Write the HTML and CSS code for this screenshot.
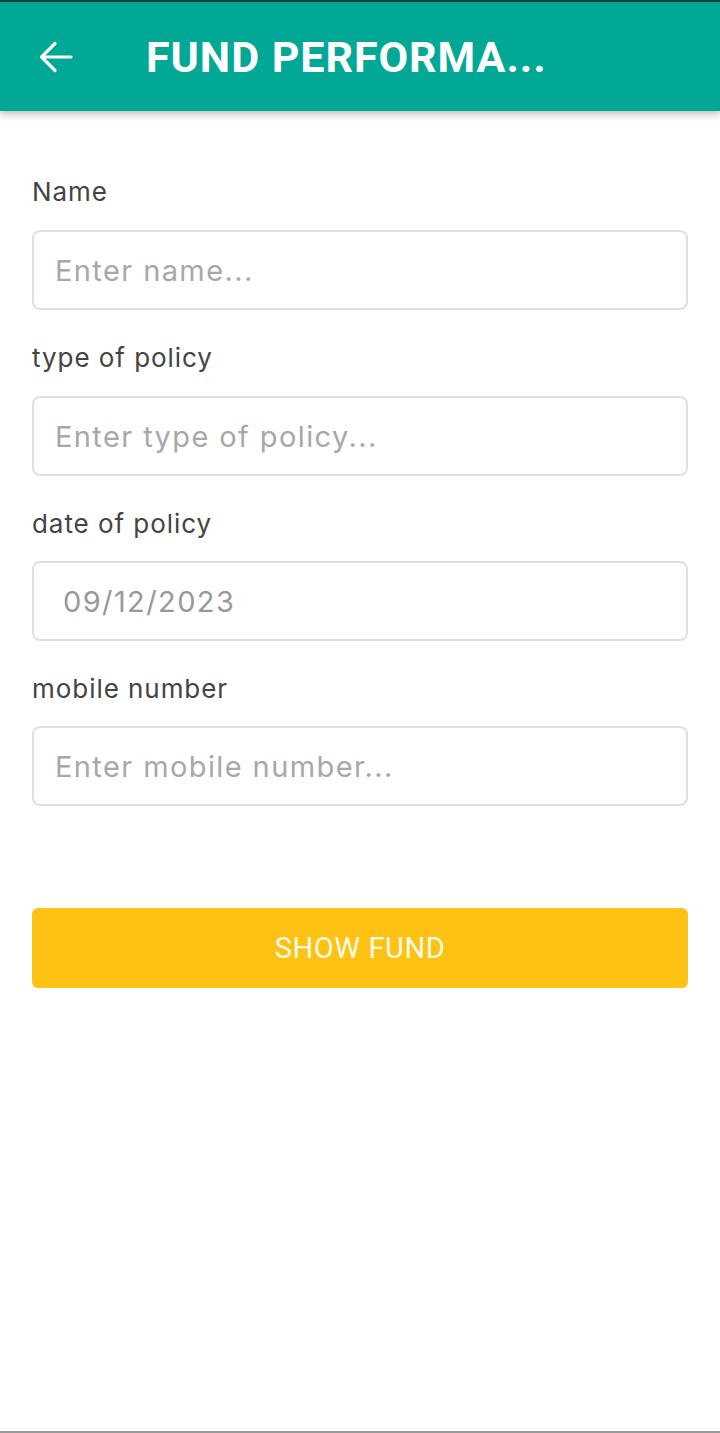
FILE: index.html
```html
<!DOCTYPE html>
<html>
<head>
<meta charset="utf-8">
<link rel="stylesheet" href="styles.css">
</head>
<body>
<div class="screen">
  <header class="appbar">
    <button class="back" aria-label="Back">
      <svg width="48" height="48" viewBox="0 0 48 48">
        <path d="M39 24H10.5M23 10.5L9.5 24L23 37.5" fill="none" stroke="#fff" stroke-width="3.2" stroke-linecap="round" stroke-linejoin="round"/>
      </svg>
    </button>
    <h1 class="title">FUND PERFORMA...</h1>
  </header>
  <main class="form">
    <div class="field">
      <label class="label">Name</label>
      <div class="input placeholder">Enter name...</div>
    </div>
    <div class="field">
      <label class="label">type of policy</label>
      <div class="input placeholder">Enter type of policy...</div>
    </div>
    <div class="field">
      <label class="label">date of policy</label>
      <div class="input date">09/12/2023</div>
    </div>
    <div class="field">
      <label class="label">mobile number</label>
      <div class="input placeholder">Enter mobile number...</div>
    </div>
    <button class="submit">SHOW FUND</button>
  </main>
  <div class="spacer"></div>
  <div class="bottomline"></div>
</div>
</body>
</html>
```

FILE: styles.css
```css
* { box-sizing: border-box; }
html, body { margin: 0; padding: 0; }
body {
  background: #ffffff;
  font-family: Inter, Roboto, "Noto Sans", sans-serif;
}
.screen {
  width: 720px;
  height: 1433px;
  display: flex;
  flex-direction: column;
  overflow: hidden;
}
.appbar {
  height: 111px;
  flex: none;
  background: #02a896;
  border-top: 2px solid #1d3d39;
  display: flex;
  align-items: center;
  box-shadow: 0 3px 8px rgba(0,0,0,0.28);
  position: relative;
  z-index: 1;
}
.back {
  width: 48px;
  height: 48px;
  margin-left: 32px;
  padding: 0;
  border: 0;
  background: none;
  display: flex;
}
.title {
  margin: 0 0 0 66px;
  color: #ffffff;
  font-family: Roboto, sans-serif;
  font-weight: 700;
  font-size: 43px;
  letter-spacing: 0.95px;
}
.form {
  padding: 63px 32px 0 32px;
  display: flex;
  flex-direction: column;
}
.field {
  display: flex;
  flex-direction: column;
  margin-bottom: 30px;
}
.label {
  font-size: 26px;
  line-height: 36px;
  letter-spacing: 0.95px;
  color: #444444;
  margin-bottom: 20px;
}
.field:nth-child(n+3) .label { margin-bottom: 19px; }
.input {
  height: 80px;
  border: 2px solid #e0e0e0;
  border-radius: 8px;
  display: flex;
  align-items: center;
  padding-left: 21px;
  font-size: 29px;
  letter-spacing: 1.4px;
  color: #a8a8a8;
}
.input.date {
  padding-left: 29px;
  color: #999999;
}
.submit {
  margin-top: 72px;
  height: 80px;
  border: 0;
  border-radius: 6px;
  background: #fec214;
  color: #fffbea;
  font-family: Roboto, sans-serif;
  font-size: 29px;
  letter-spacing: 0.6px;
}
.spacer { flex: 1; }
.bottomline {
  height: 2px;
  background: #9a9a9a;
  flex: none;
}
```
